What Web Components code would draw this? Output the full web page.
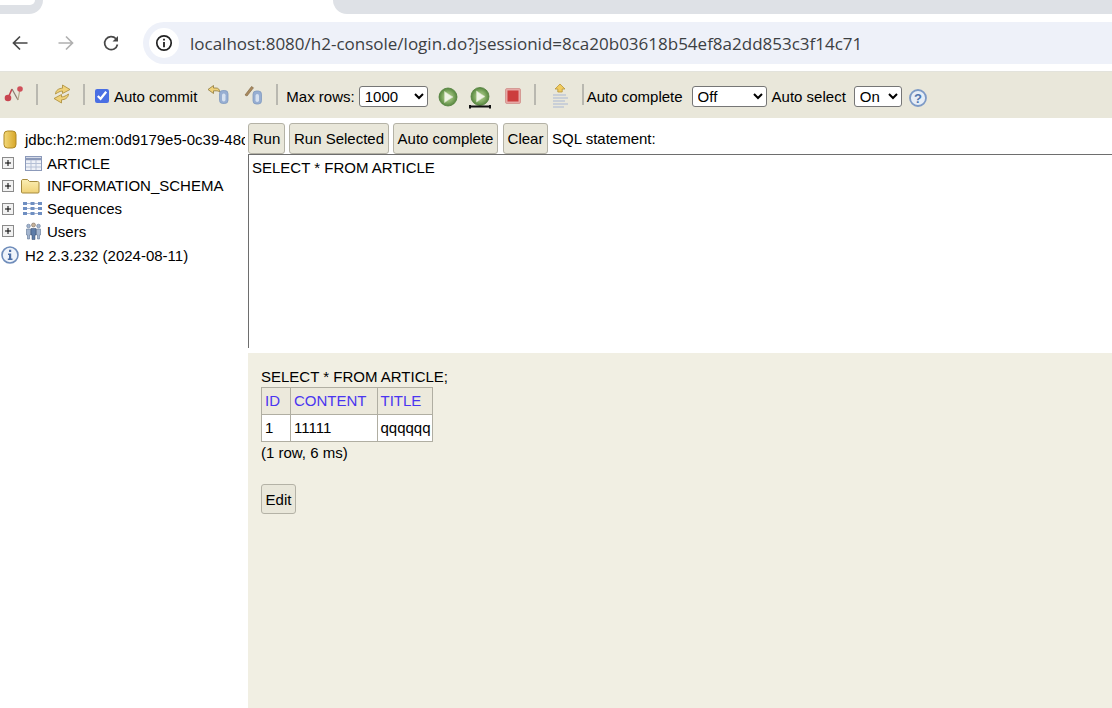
<!DOCTYPE html>
<html lang="en">
<head>
<meta charset="utf-8">
<title>H2 Console</title>
<style>
  html, body { margin: 0; height: 100%; background: #fff; overflow: hidden; }
  body { display: flex; flex-direction: column; height: 708px; font: 15px "Liberation Sans", Arial, sans-serif; color: #000; }
  .main { flex: 1; display: flex; min-height: 0; }
  .right { flex: 1; min-width: 0; display: flex; flex-direction: column; }
</style>
</head>
<body>
<browser-bar url="localhost:8080/h2-console/login.do?jsessionid=8ca20b03618b54ef8a2dd853c3f14c71"></browser-bar>
<h2-toolbar></h2-toolbar>
<div class="main">
  <h2-tree></h2-tree>
  <div class="right">
    <sql-pane></sql-pane>
    <result-pane></result-pane>
  </div>
</div>

<script>
const ball = (id, cx, cy) => `<defs><radialGradient id="${id}" cx=".5" cy=".5" r=".55"><stop offset=".45" stop-color="#8fb56f"/><stop offset="1" stop-color="#4b7d35"/></radialGradient></defs><circle cx="${cx}" cy="${cy}" r="9" fill="url(#${id})" stroke="#4f7f3a" stroke-width=".8"/><path d="M${cx - 3.5} ${cy - 5.5} ${cx + 5} ${cy} ${cx - 3.500} ${cy + 5.500}z" fill="#eff3e4" stroke="#cfdcbc" stroke-width=".6"/>`;
const can = (x, y) => `<rect x="${x}" y="${y}" width="8.500" height="13" rx="3.200" fill="#97aed2" stroke="#809abf" stroke-width=".8"/><rect x="${x + 2.500}" y="${y + 3}" width="3.500" height="8" rx="1.700" fill="#d6e1f0"/>`;
const ICONS = {
  back: `<svg width="18" height="18" viewBox="0 0 18 18" fill="none" stroke="#474747" stroke-width="1.700"><path d="M16.500 9H3M9 2.500 2.500 9 9 15.500"/></svg>`,
  forward: `<svg width="18" height="18" viewBox="0 0 18 18" fill="none" stroke="#b0b0b0" stroke-width="1.700"><path d="M1.500 9H15M9 2.500 15.500 9 9 15.500"/></svg>`,
  reload: `<svg width="18" height="18" viewBox="0 0 18 18" fill="none" stroke="#474747" stroke-width="1.700"><path d="M15.500 10.500A6.500 6.500 0 1 1 14 4.800"/><path d="M16 2v5.500h-5.500z" fill="#474747" stroke="none"/></svg>`,
  info: `<svg width="18" height="18" viewBox="0 0 18 18"><circle cx="9" cy="9" r="7.200" fill="none" stroke="#222" stroke-width="1.700"/><path d="M8.100 8h1.800v5.200H8.100zM8.100 4.800h1.800v1.800H8.100z" fill="#222"/></svg>`,
  disconnect: `<svg width="20" height="20" viewBox="0 0 20 20"><path d="M4.500 13 8 5" stroke="#c2434e" stroke-width="1.600" fill="none"/><path d="M8 5 14 16" stroke="#8a7a70" stroke-width="1.200" fill="none"/><path d="M14 16 16 5" stroke="#b9a98c" stroke-width="1.200" fill="none"/><circle cx="4" cy="14" r="3.300" fill="#c9444f"/><circle cx="16" cy="5" r="2.800" fill="#d0505a"/></svg>`,
  refresh: `<svg width="20" height="20" viewBox="0 0 20 20" stroke="#a98a35" stroke-width=".8" fill="#f0d27a"><path d="M3.500 10C3.800 6 7 4.300 10.500 4.200V1L18 5.500 10.500 9.500V7C8 7.200 6 8.200 3.500 10z"/><path d="M16.500 10C16.200 14 13 15.700 9.500 15.800V19L2 14.500 9.500 10.500V13C12 12.800 14 11.800 16.500 10z"/></svg>`,
  rollback: `<svg width="22" height="20" viewBox="0 0 22 20"><path d="M1 4.500 6.500 .5v2.500h2.500c2.500 0 3.500 1.500 3.800 4-1.200-1-2.500-1.200-3.800-1.200H6.500V8.500z" fill="#f0d27a" stroke="#8f7a3c" stroke-width=".8"/>${can(12.5, 5.500)}</svg>`,
  commit: `<svg width="20" height="20" viewBox="0 0 20 20"><path d="M1 10 7.500 1.500l2 1.300L3 11z" fill="#a98a5e" stroke="#7a5f3c" stroke-width=".6"/>${can(9, 6)}</svg>`,
  run: `<svg width="20" height="20" viewBox="0 0 20 20">${ball("g1", 10, 10)}</svg>`,
  runsel: `<svg width="24" height="22" viewBox="0 0 24 22">${ball("g2", 12, 9.500)}<path d="M2 19.500h20M2 21.500v-3.500M22 21.500v-3.500" stroke="#111" stroke-width="2" fill="none"/></svg>`,
  stop: `<svg width="16" height="16" viewBox="0 0 16 16"><rect x=".5" y=".5" width="15" height="15" rx="1.500" fill="#e6a9a6" stroke="#d59a94"/><rect x="2.500" y="2.500" width="11" height="11" fill="#cc3d3d"/></svg>`,
  history: `<svg width="18" height="26" viewBox="0 0 18 26"><path d="M9 1 14 6h-2.800v3H6.800V6H4z" fill="#f1cb5e" stroke="#b79538" stroke-width=".8"/><path d="M2 12h13M2 15h15M2 18h12M2 21h15M2 24h11" stroke="#a9b7d3" stroke-width="1.200"/></svg>`,
  help: `<svg width="18" height="18" viewBox="0 0 18 18"><circle cx="9" cy="9" r="8" fill="#e6edf6" stroke="#7d9ac6" stroke-width="1.800"/><text x="9" y="13.500" text-anchor="middle" font-family="Liberation Sans, sans-serif" font-weight="700" font-size="13" fill="#4f74ad">?</text></svg>`,
  database: `<svg width="14" height="19" viewBox="0 0 14 19"><defs><linearGradient id="gd"><stop offset="0" stop-color="#f3d97a"/><stop offset="1" stop-color="#d7a628"/></linearGradient></defs><rect x="1" y="1" width="12" height="17" rx="3.500" fill="url(#gd)" stroke="#ad8724"/></svg>`,
  table: `<svg width="17" height="15" viewBox="0 0 17 15"><rect x=".5" y=".5" width="16" height="14" fill="#eef1f7" stroke="#8c9aba"/><path d="M.5 3h16" stroke="#8c9aba" stroke-width="2.500"/><path d="M1 7.500h15M1 11h15M6 4v10M11 4v10" stroke="#b5c0d6"/></svg>`,
  folder: `<svg width="19" height="16" viewBox="0 0 19 16"><defs><linearGradient id="gf" x2="0" y2="1"><stop offset="0" stop-color="#fbeeb4"/><stop offset="1" stop-color="#f0d277"/></linearGradient></defs><path d="M.5 14v-11c0-1 .5-1.500 1.500-1.500h4.500l2 2h8c1 0 1.500 .5 1.500 1.500v9c0 .6-.4 1-1 1h-15.500c-.6 0-1-.4-1-1z" fill="url(#gf)" stroke="#a58a3f"/></svg>`,
  sequence: `<svg width="19" height="15" viewBox="0 0 19 15" fill="#6f8fc2"><path d="M4 2.500h11M4 7.500h11M4 12.500h11" stroke="#aab9d5"/><rect x="0" y="1" width="4" height="3"/><rect x="7.500" y="1" width="4" height="3"/><rect x="15" y="1" width="4" height="3"/><rect x="0" y="6" width="4" height="3"/><rect x="7.500" y="6" width="4" height="3"/><rect x="15" y="6" width="4" height="3"/><rect x="0" y="11" width="4" height="3"/><rect x="7.500" y="11" width="4" height="3"/><rect x="15" y="11" width="4" height="3"/></svg>`,
  users: `<svg width="17" height="18" viewBox="0 0 17 18"><g fill="#a3b5cf" stroke="#5f7596" stroke-width=".6"><circle cx="3.500" cy="4" r="1.800"/><circle cx="13.500" cy="4" r="1.800"/><path d="M1.500 7h4v6H4.500v4H2.500v-4h-1zM11.500 7h4v6h-1v4h-2v-4h-1z"/></g><circle cx="8.500" cy="3" r="2" fill="#c6b29a" stroke="#6a5c50" stroke-width=".5"/><path d="M6 6.500h5V13h-1v4.500H7V13H6z" fill="#5d7ca8" stroke="#35496b" stroke-width=".5"/></svg>`,
  h2info: `<svg width="18" height="18" viewBox="0 0 18 18"><circle cx="9" cy="9" r="8" fill="#eef3fa" stroke="#6e8cba" stroke-width="1.600"/><path d="M7 7.500h3.200v5H11.500V14H6.800v-1.500H8V9H7zM8 3.800h2.200V6H8z" fill="#4d6fa6"/></svg>`,
  plus: `<svg width="12" height="12" viewBox="0 0 12 12"><rect x=".5" y=".5" width="11" height="11" fill="#f2f2f2" stroke="#8a8a8a"/><path d="M3 6h6M6 3v6" stroke="#000"/></svg>`
};

// small wrapper so every icon is a plain inline box
class H2Icon extends HTMLElement {
  constructor() {
    super();
    this.attachShadow({ mode: "open" });
  }
  connectedCallback() {
    this.shadowRoot.innerHTML = `<style>:host{display:inline-flex;flex:none}svg{display:block}</style>${ICONS[this.getAttribute("name")]}`;
  }
}
customElements.define("h2-icon", H2Icon);

class BrowserBar extends HTMLElement {
  constructor() {
    super();
    this.attachShadow({ mode: "open" });
  }
  connectedCallback() {
    this.shadowRoot.innerHTML = `
  <style>
    :host { display: block; background: #fff; }
    .tabs { height: 14px; display: flex; background: #fff; }
    .tab-left { width: 43px; background: #dee1e6; border-radius: 0 0 14px 0; }
    .tab-left div { width: 35px; height: 5px; background: #fff; border-radius: 0 0 10px 0; }
    .tab-right { margin-left: 290px; flex: 1; background: #dee1e6; border-radius: 0 0 0 14px; }
    .nav { height: 57px; display: flex; align-items: flex-start; padding-top: 8px; box-sizing: border-box; }
    .btn { margin-top: 12px; }
    .pill { margin-left: 23px; flex: 1; height: 42px; background: #eef1f9; border-radius: 21px 0 0 21px; display: flex; align-items: center; padding-left: 6px; }
    .circle { width: 30px; height: 30px; background: #fff; border-radius: 50%; display: flex; align-items: center; justify-content: center; }
    .url { margin-left: 11px; font: 17px "Open Sans", sans-serif; color: #3c4043; white-space: nowrap; }
  </style>
  <div class="tabs"><div class="tab-left"><div></div></div><div class="tab-right"></div></div>
  <div class="nav">
    <h2-icon class="btn" name="back" style="margin-left:11px"></h2-icon>
    <h2-icon class="btn" name="forward" style="margin-left:28px"></h2-icon>
    <h2-icon class="btn" name="reload" style="margin-left:27px"></h2-icon>
    <div class="pill"><div class="circle"><h2-icon name="info"></h2-icon></div><span class="url">${this.getAttribute("url")}</span></div>
  </div>`;
  }
}
customElements.define("browser-bar", BrowserBar);

class H2Toolbar extends HTMLElement {
  constructor() {
    super();
    this.attachShadow({ mode: "open" });
  }
  connectedCallback() {
    this.shadowRoot.innerHTML = `
  <style>
    :host { display: flex; align-items: center; height: 47px; box-sizing: border-box; padding-top: 3px; background: #e9e7da; border-top: 1px solid #e3e3dc; font: 15px "Liberation Sans", Arial, sans-serif; white-space: nowrap; }
    .sep { width: 2px; height: 21px; margin-bottom: 5px; background: #b9b8b0; flex: none; }
    input { width: 14px; height: 14px; margin: 0 0 2px; accent-color: #4a6fe3; flex: none; }
    select { font: 15px "Liberation Sans", Arial, sans-serif; height: 21px; background: #fff; border: 1px solid #767676; border-radius: 3px; padding: 0 0 0 1px; flex: none; color: #000; }
  </style>
  <h2-icon name="disconnect" style="margin:0 0 5px 4px"></h2-icon>
  <div class="sep" style="margin-left:12px"></div>
  <h2-icon name="refresh" style="margin:0 0 5px 14px"></h2-icon>
  <div class="sep" style="margin-left:11px"></div>
  <input type="checkbox" checked style="margin-left:10px">
  <span style="margin-left:5px">Auto commit</span>
  <h2-icon name="rollback" style="margin:0 0 3px 10px"></h2-icon>
  <h2-icon name="commit" style="margin:0 0 3px 15px"></h2-icon>
  <div class="sep" style="margin-left:12px"></div>
  <span style="margin-left:8px">Max rows:</span>
  <select style="margin-left:4px;width:69px"><option>1000</option></select>
  <h2-icon name="run" style="margin:1px 0 0 10px"></h2-icon>
  <h2-icon name="runsel" style="margin:3px 0 0 10px"></h2-icon>
  <h2-icon name="stop" style="margin:0 0 1px 13px"></h2-icon>
  <div class="sep" style="margin-left:13px"></div>
  <h2-icon name="history" style="margin:0 0 1px 15px"></h2-icon>
  <div class="sep" style="margin-left:13px"></div>
  <span style="margin-left:3px">Auto complete</span>
  <select style="margin-left:9px;width:75px"><option>Off</option></select>
  <span style="margin-left:5px">Auto select</span>
  <select style="margin-left:8px;width:48px"><option>On</option></select>
  <h2-icon name="help" style="margin:3px 0 0 7px"></h2-icon>`;
  }
}
customElements.define("h2-toolbar", H2Toolbar);

class TreeRow extends HTMLElement {
  constructor() {
    super();
    this.attachShadow({ mode: "open" });
  }
  connectedCallback() {
    const expand = this.hasAttribute("expand");
    const inset = this.getAttribute("inset") || "0";
    this.shadowRoot.innerHTML = `
  <style>
    :host { display: grid; grid-template-columns: ${expand ? "14px 33px" : "25px"} 1fr; align-items: center; height: 22.75px; white-space: nowrap; overflow: hidden; }
    .plus { margin-left: 2px; }
    .icon { margin-left: ${inset}px; }
  </style>
  ${expand ? `<h2-icon class="plus" name="plus"></h2-icon>` : ""}
  <h2-icon class="icon" name="${this.getAttribute("icon")}"></h2-icon>
  <span><slot></slot></span>`;
  }
}
customElements.define("tree-row", TreeRow);

class H2Tree extends HTMLElement {
  constructor() {
    super();
    this.attachShadow({ mode: "open" });
  }
  connectedCallback() {
    this.shadowRoot.innerHTML = `
  <style>
    :host { display: block; width: 248px; flex: none; box-sizing: border-box; padding: 10px 3px 0 0; background: #fff; }
  </style>
  <tree-row icon="database" inset="3">jdbc:h2:mem:0d9179e5-0c39-48c</tree-row>
  <tree-row expand icon="table" inset="11" style="margin-top:1px">ARTICLE</tree-row>
  <tree-row expand icon="folder" inset="7">INFORMATION_SCHEMA</tree-row>
  <tree-row expand icon="sequence" inset="9">Sequences</tree-row>
  <tree-row expand icon="users" inset="11">Users</tree-row>
  <tree-row icon="h2info" inset="1" style="margin-top:1px">H2 2.3.232 (2024-08-11)</tree-row>`;
  }
}
customElements.define("h2-tree", H2Tree);

class H2Button extends HTMLElement {
  constructor() {
    super();
    this.attachShadow({ mode: "open" });
  }
  connectedCallback() {
    this.shadowRoot.innerHTML = `
  <style>
    :host { display: inline-flex; flex: none; }
    button { font: 15px "Liberation Sans", Arial, sans-serif; color: #000; background: #e9e7da; border: 1px solid #b4b2a6; border-radius: 3px; padding: 0; height: 100%; width: 100%; white-space: nowrap; }
  </style>
  <button><slot></slot></button>`;
  }
}
customElements.define("h2-button", H2Button);

class SqlPane extends HTMLElement {
  constructor() {
    super();
    this.attachShadow({ mode: "open" });
  }
  connectedCallback() {
    this.shadowRoot.innerHTML = `
  <style>
    :host { display: block; height: 235px; flex: none; background: #fff; }
    .bar { height: 36px; box-sizing: border-box; padding-top: 5px; display: flex; align-items: stretch; gap: 4px; }
    .label { align-self: center; white-space: nowrap; }
    .editor { height: 194px; box-sizing: border-box; border-top: 1px solid #6e6e6e; border-left: 1px solid #6e6e6e; padding: 4px 3px; line-height: 17px; }
  </style>
  <div class="bar">
    <h2-button style="width:37px">Run</h2-button>
    <h2-button style="width:100px">Run Selected</h2-button>
    <h2-button style="width:105px">Auto complete</h2-button>
    <h2-button style="width:45px;margin-left:1px">Clear</h2-button>
    <span class="label">SQL statement:</span>
  </div>
  <div class="editor">SELECT * FROM ARTICLE</div>`;
  }
}
customElements.define("sql-pane", SqlPane);

class ResultPane extends HTMLElement {
  constructor() {
    super();
    this.attachShadow({ mode: "open" });
  }
  connectedCallback() {
    this.shadowRoot.innerHTML = `
  <style>
    :host { display: block; flex: 1; background: #f1efe3; padding: 15px 13px 0; min-height: 0; }
    .stmt { line-height: 17px; height: 17px; }
    table { border-collapse: collapse; margin-top: 2px; background: #fff; }
    th, td { border: 1px solid #b0aea2; padding: 0 3px 2px; font-weight: 400; text-align: left; height: 27px; line-height: 17px; box-sizing: border-box; }
    th { background: #ece9dc; color: #4a35f0; padding-right: 10px; }
    td:last-child { padding-right: 1px; }
    .stats { margin-top: 2px; line-height: 17px; }
    h2-button { display: flex; width: 35px; height: 30px; margin-top: 23px; }
  </style>
  <div class="stmt">SELECT * FROM ARTICLE;</div>
  <table>
    <tr><th>ID</th><th>CONTENT</th><th>TITLE</th></tr>
    <tr><td>1</td><td>11111</td><td>qqqqqq</td></tr>
  </table>
  <div class="stats">(1 row, 6 ms)</div>
  <h2-button>Edit</h2-button>`;
  }
}
customElements.define("result-pane", ResultPane);
</script>
</body>
</html>
